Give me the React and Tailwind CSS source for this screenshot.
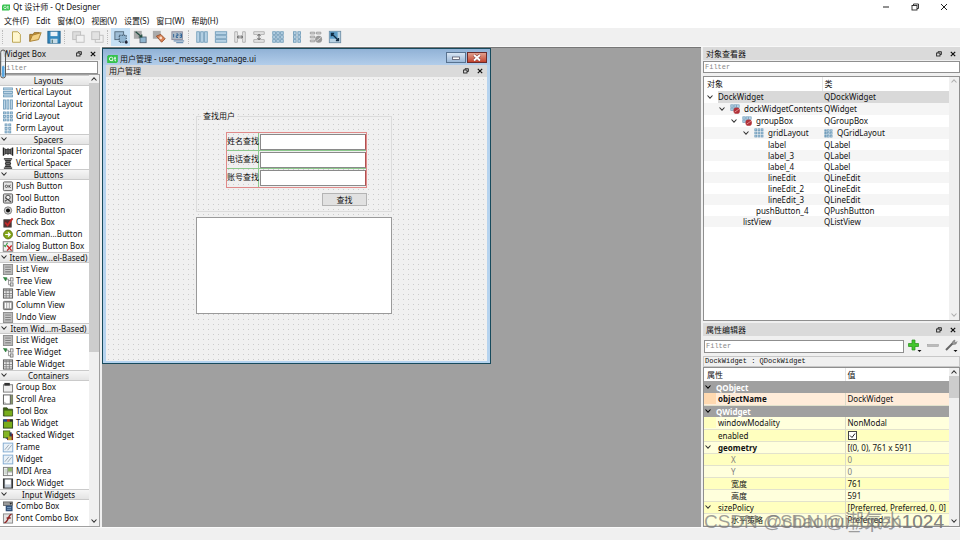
import React, { useState } from "react";
import clsx from "clsx";

const BLUE = "#6f9bb9";
const LIGHT = "#bcd6e8";

const Chevron = ({ dir = "down", className = "text-[#333]" }) => (
  <svg viewBox="0 0 8 8" className={clsx("w-2 h-2 shrink-0", className)} fill="none" stroke="currentColor" strokeWidth="1.1">
    <path d={dir === "down" ? "M1.5 2.5L4 5.2L6.5 2.5" : "M1.5 5.5L4 2.8L6.5 5.5"} />
  </svg>
);

const cells = (xs, ys, w, h) =>
  xs.flatMap((x) =>
    ys.map((y) => <rect key={x + "-" + y} x={x} y={y} width={w} height={h} fill={LIGHT} stroke={BLUE} strokeWidth="0.9" />)
  );

const listLines = (
  <>
    <rect x="1" y="0.5" width="10" height="11" fill="#b9b9b9" stroke="#8a8a8a" />
    <path d="M3 3.5h6M3 6h6M3 8.5h6" stroke="#777" />
    <path d="M3 4.5h6M3 7h6" stroke="#ddd" strokeWidth="0.6" />
  </>
);
const treeIcon = (
  <>
    <path d="M1 1.5l4 0.5l-1.5 3.5z" fill="#2f8f3f" stroke="#1f6a30" strokeWidth="0.6" />
    <path d="M4.5 3.5h2v6h2M6.5 5h2" fill="none" stroke="#777" strokeWidth="0.8" />
    <rect x="8.5" y="2" width="3" height="3.5" fill="#eee" stroke="#666" strokeWidth="0.8" />
    <rect x="8.5" y="7.5" width="3" height="3.5" fill="#ddd" stroke="#666" strokeWidth="0.8" />
  </>
);
const tableIcon = (
  <>
    <rect x="1" y="1" width="10" height="10" fill="#e6e6e6" stroke="#555" />
    <rect x="1.5" y="1.5" width="9" height="2" fill="#999" />
    <path d="M4 1v10M7.5 1v10M1 6h10M1 8.5h10" stroke="#777" strokeWidth="0.8" />
  </>
);
const frameIcon = (
  <>
    <rect x="0.8" y="1.2" width="10.4" height="9.6" fill="#e9f1f8" stroke="#7fa8cf" />
    <path d="M2.5 8.5l4.5-5.5M5.5 9l4.5-5.5" stroke="#8d9aa6" strokeWidth="0.9" />
  </>
);

const icons = {
  vlayout: cells([1], [1, 4.8, 8.6], 10, 2.2),
  hlayout: cells([1, 4.8, 8.6], [1], 2.2, 10),
  grid: cells([1, 4.8, 8.6], [1, 4.8, 8.6], 2.2, 2.2),
  form: cells([2.8, 6.8], [1, 4.8, 8.6], 2.2, 2.2),
  hspacer: (
    <>
      <path d="M1 1.5v9M11 1.5v9" stroke="#222" strokeWidth="1.4" />
      <path d="M2 2l2 1.5l2-1l2 1l2-1.5v8l-2-1.5l-2 1l-2-1l-2 1.5z" fill="#333" />
      <path d="M4 4.5v3.5M6 4v4M8 4.5v3.5" stroke="#aaa" strokeWidth="0.6" />
    </>
  ),
  vspacer: (
    <>
      <path d="M1.5 1h9M1.5 11h9" stroke="#222" strokeWidth="1.5" />
      <path d="M2 2h8l-1.5 2l1 2l-1 2l1.5 2h-8l1.5-2l-1-2l1-2z" fill="#333" />
      <path d="M4 4h4M4 6h4M4 8h4" stroke="#aaa" strokeWidth="0.6" />
    </>
  ),
  push: (
    <>
      <rect x="1" y="1" width="10" height="9.5" rx="1" fill="#e4e4e4" stroke="#555" />
      <circle cx="4.3" cy="5.8" r="1.3" fill="none" stroke="#333" strokeWidth="0.8" />
      <path d="M7 4.3v3M9 4.3l-1.8 1.5l1.8 1.5" fill="none" stroke="#333" strokeWidth="0.8" />
    </>
  ),
  tool: (
    <>
      <rect x="1" y="1" width="10" height="10" rx="1" fill="#d4d4d4" stroke="#555" />
      <circle cx="6" cy="4.8" r="2.4" fill="#f0f0f0" stroke="#444" />
      <path d="M3 5l6.5 5M2.5 9l2-1" stroke="#444" strokeWidth="1.2" />
    </>
  ),
  radio: (
    <>
      <circle cx="6" cy="6" r="4" fill="#d6d6d6" stroke="#777" />
      <circle cx="6" cy="6" r="2.2" fill="#111" />
    </>
  ),
  check: (
    <>
      <rect x="1.5" y="3" width="8" height="8" fill="#5a2c2c" stroke="#444" />
      <path d="M3 6l2.5 3L11 1.5" fill="none" stroke="#c42a2a" strokeWidth="2" />
    </>
  ),
  command: (
    <>
      <circle cx="6" cy="6" r="4.8" fill="#86a818" stroke="#566f08" />
      <path d="M3 6h5M6 3.8L8.3 6L6 8.2" fill="none" stroke="#fff" strokeWidth="1.3" />
    </>
  ),
  dialog: (
    <>
      <rect x="0.8" y="0.8" width="10.4" height="10.4" fill="#f0f0f0" stroke="#777" />
      <path d="M1.5 4.5l1.5 1.5L5.5 2" fill="none" stroke="#3c9a4a" strokeWidth="1.2" />
      <path d="M5 5l5 5.5M10 5l-5 5.5" stroke="#c62424" strokeWidth="1.5" />
    </>
  ),
  list: listLines,
  tree: treeIcon,
  table: tableIcon,
  column: (
    <>
      <rect x="1" y="1.5" width="10" height="9" rx="1" fill="#999" stroke="#666" />
      <path d="M3.3 3v6M6 3v6M8.7 3v6" stroke="#fff" strokeWidth="1.7" />
    </>
  ),
  group: (
    <>
      <rect x="1" y="3" width="10" height="8" fill="#eee" stroke="#777" />
      <rect x="2" y="1" width="6" height="3" fill="#333" />
    </>
  ),
  scroll: (
    <>
      <rect x="1" y="1" width="7.5" height="10" fill="#fff" stroke="#555" />
      <rect x="9" y="1" width="2.2" height="10" fill="#8a9a6a" stroke="#555" strokeWidth="0.6" />
      <path d="M2 9l2 1.5" stroke="#999" />
    </>
  ),
  toolbox: (
    <>
      <path d="M1 2h4l1 1.5h5V11H1z" fill="#3f6318" stroke="#2c3f14" strokeWidth="0.8" />
      <rect x="2" y="5" width="8.5" height="5.5" fill="#79ad1c" />
    </>
  ),
  tab: (
    <>
      <rect x="1" y="2" width="10" height="9" fill="#79ad1c" stroke="#28401a" />
      <rect x="1" y="1.5" width="4" height="2.5" fill="#23459a" />
      <rect x="5" y="1.5" width="3" height="2.5" fill="#b92c22" />
      <rect x="8" y="1.5" width="3" height="2.5" fill="#2a2a2a" />
    </>
  ),
  stacked: (
    <>
      <rect x="5" y="4" width="6.5" height="7" fill="#8a2320" />
      <rect x="3.5" y="2.5" width="6.5" height="7" fill="#26396f" />
      <rect x="1" y="1" width="7" height="7.5" fill="#84b522" stroke="#3d5a10" strokeWidth="0.8" />
      <rect x="6" y="7" width="4" height="4" fill="#b5a127" />
    </>
  ),
  frame: frameIcon,
  mdi: (
    <>
      <rect x="1" y="1.5" width="10" height="9" fill="#f4f4f4" stroke="#777" />
      <rect x="6" y="2" width="4.5" height="4" fill="#8fb36a" />
      <rect x="2" y="3" width="3" height="6" fill="#cfd8cf" />
      <path d="M5.5 2v8M5.5 6.5h5" stroke="#777" strokeWidth="0.7" />
    </>
  ),
  dock: (
    <>
      <rect x="1" y="1" width="10" height="10" fill="#c3ccd6" stroke="#333" />
      <path d="M1.5 1v10M10.5 1v10" stroke="#333" strokeWidth="1.5" />
      <rect x="3" y="2" width="6" height="5" fill="#fff" />
    </>
  ),
  combo: (
    <>
      <rect x="1" y="1" width="10" height="4" fill="#9a9a9a" stroke="#555" strokeWidth="0.8" />
      <path d="M7.5 2l3 0l-1.5 2z" fill="#222" />
      <rect x="3.5" y="5" width="7.5" height="6.2" fill="#2f4f78" />
      <path d="M5 7h4.5M5 9h4.5" stroke="#88aacc" />
    </>
  ),
  font: (
    <>
      <rect x="1" y="1" width="10" height="10" fill="#e3e3e3" stroke="#888" />
      <path d="M10 1.5C6 1 7 10 2 10.5M4.5 5.5h4.5" fill="none" stroke="#8e2323" strokeWidth="1.5" />
    </>
  ),
  broken: (
    <>
      {cells([1, 4.8], [1, 4.8], 2.8, 2.8)}
      <rect x="8" y="1" width="3" height="3" fill={LIGHT} stroke={BLUE} strokeWidth="0.8" />
      <circle cx="8" cy="8" r="3.8" fill="#b03038" />
      <path d="M5.5 9.8l5-3.5" stroke="#e6a0a0" strokeWidth="1" />
    </>
  ),
};

const Icon = ({ name, className = "w-3 h-3" }) => (
  <svg viewBox="0 0 12 12" className={clsx("shrink-0", className)}>{icons[name]}</svg>
);

const toolbarIcons = {
  new: <path d="M4 2h6l3 3v9H4z" fill="#fff7cf" stroke="#b59b45" />,
  open: (
    <>
      <path d="M2 13V5h4l1-2h6v3" fill="#c9963c" stroke="#8d6620" />
      <path d="M2 13L5 6l10-3l-3 8z" fill="#f3d184" stroke="#a37a2b" />
    </>
  ),
  save: (
    <>
      <rect x="1" y="1.5" width="14" height="13.5" fill="#3387bd" stroke="#1f5f8c" />
      <rect x="4" y="2" width="8" height="5" fill="#e9f2f8" />
      <rect x="4" y="10" width="8" height="5" fill="#c7dbe6" />
      <path d="M6 11v4" stroke="#255" />
    </>
  ),
  back: (
    <>
      <rect x="2" y="2" width="9" height="9" fill="#ddd" stroke="#bcbcbc" />
      <rect x="6" y="6" width="9" height="8" fill="#f1f1f1" stroke="#bcbcbc" />
    </>
  ),
  front: (
    <>
      <rect x="6" y="6" width="9" height="8" fill="#f1f1f1" stroke="#bcbcbc" />
      <rect x="2" y="2" width="9" height="9" fill="#e2e2e2" stroke="#bcbcbc" />
    </>
  ),
  widgets: (
    <>
      <rect x="1" y="2" width="10" height="9" fill="#9dbdd6" stroke="#4f6678" />
      <rect x="6" y="6" width="8" height="8" fill="#8fb4d0" stroke="#26384a" strokeDasharray="1.5 1.2" />
      <path d="M13 13h2v2h-2z" stroke="#223" fill="#223" />
    </>
  ),
  signals: (
    <>
      <rect x="1" y="1" width="9" height="9" fill="#a8a8a8" />
      <rect x="8" y="8" width="7" height="6.5" fill="#8fb5cf" stroke="#567" />
      <path d="M3 2l7 6M10 5v3H6.5" stroke="#234d3f" strokeWidth="1.4" fill="none" />
    </>
  ),
  buddies: (
    <>
      <rect x="1" y="1" width="9" height="9" fill="#aaa" />
      <path d="M5 7l5-2l5 5l-4 4z" fill="#d98255" stroke="#954b26" />
      <circle cx="10" cy="9" r="1.5" fill="#f9dfcd" />
    </>
  ),
  tabs: (
    <>
      <rect x="1" y="2" width="12" height="9" fill="#b0bcc7" stroke="#889" />
      <path d="M3 4.5v4M6 4.5h2v2H6v2h2M10 4.5h2v4h-2M10 6.5h2" stroke="#245c93" fill="none" />
      <path d="M3 12.5h12M6 14.5h8" stroke="#3c6f9f" />
    </>
  ),
  hl: [2, 6.5, 11].map((x) => <rect key={x} x={x} y="2" width="3" height="12" fill={LIGHT} stroke={BLUE} />),
  vl: [2, 6.5, 11].map((y) => <rect key={y} x="1.5" y={y} width="13" height="3" fill={LIGHT} stroke={BLUE} />),
  hs: (
    <>
      <path d="M2 2h3v12H2zM11 2h3v12h-3z" fill="#e8e8e8" stroke="#aaa" />
      <path d="M5 8h6M7 6l-2 2l2 2M9 6l2 2l-2 2" fill="none" stroke="#555" />
    </>
  ),
  vs: (
    <>
      <path d="M2 2h12v3H2zM2 11h12v3H2z" fill="#e8e8e8" stroke="#aaa" />
      <path d="M8 5v6M6 7l2-2l2 2M6 9l2 2l2-2" fill="none" stroke="#555" />
    </>
  ),
  gl: [2, 6.5, 11].flatMap((x) => [2, 6.5, 11].map((y) => <rect key={x + "g" + y} x={x} y={y} width="3" height="3" fill={LIGHT} stroke={BLUE} />)),
  fl: [4, 9].flatMap((x) => [2, 6.5, 11].map((y) => <rect key={x + "f" + y} x={x} y={y} width="3" height="3" fill={LIGHT} stroke={BLUE} />)),
  brk: (
    <>
      <path d="M1.5 2.5h5v2h-5zM8.5 2.5h5v2h-5zM1.5 7h5v2h-5zM1.5 11.5h5v2h-5z" fill="#ddd" stroke="#999" />
      <circle cx="11" cy="10.5" r="4" fill="#999" />
      <path d="M8.5 12.5l5-4" stroke="#ddd" />
    </>
  ),
  adjust: (
    <>
      <rect x="1.5" y="1.5" width="13" height="13" fill="#b9d3e4" stroke="#6d8ea6" />
      <rect x="2" y="2" width="9" height="8" fill="#5c9cc6" />
      <path d="M4 4l8 8M4 7V4h3M12 9v3H9" fill="none" stroke="#102c44" strokeWidth="1.5" />
    </>
  ),
};

const toolbarGroups = [
  ["new", "open", "save"],
  ["back", "front"],
  ["widgets", "signals", "buddies", "tabs"],
  ["hl", "vl", "hs", "vs", "gl", "fl", "brk", "adjust"],
];

const menus = ["文件(F)", "Edit", "窗体(O)", "视图(V)", "设置(S)", "窗口(W)", "帮助(H)"];

const widgetGroups = [
  { title: "Layouts", open: false, items: [["vlayout", "Vertical Layout"], ["hlayout", "Horizontal Layout"], ["grid", "Grid Layout"], ["form", "Form Layout"]] },
  { title: "Spacers", open: true, items: [["hspacer", "Horizontal Spacer"], ["vspacer", "Vertical Spacer"]] },
  {
    title: "Buttons",
    open: true,
    items: [["push", "Push Button"], ["tool", "Tool Button"], ["radio", "Radio Button"], ["check", "Check Box"], ["command", "Comman...Button"], ["dialog", "Dialog Button Box"]],
  },
  { title: "Item View...el-Based)", open: true, items: [["list", "List View"], ["tree", "Tree View"], ["table", "Table View"], ["column", "Column View"], ["list", "Undo View"]] },
  { title: "Item Wid...m-Based)", open: true, items: [["list", "List Widget"], ["tree", "Tree Widget"], ["table", "Table Widget"]] },
  {
    title: "Containers",
    open: true,
    items: [["group", "Group Box"], ["scroll", "Scroll Area"], ["toolbox", "Tool Box"], ["tab", "Tab Widget"], ["stacked", "Stacked Widget"], ["frame", "Frame"], ["frame", "Widget"], ["mdi", "MDI Area"], ["dock", "Dock Widget"]],
  },
  { title: "Input Widgets", open: true, items: [["combo", "Combo Box"], ["font", "Font Combo Box"]] },
];

// pad is the indent of each tree level
const objects = [
  { name: "DockWidget", cls: "QDockWidget", pad: "pl-[2px]", open: true, selected: true },
  { name: "dockWidgetContents", cls: "QWidget", pad: "pl-[14px]", open: true, icon: "broken" },
  { name: "groupBox", cls: "QGroupBox", pad: "pl-[26px]", open: true, icon: "broken" },
  { name: "gridLayout", cls: "QGridLayout", pad: "pl-[38px]", open: true, icon: "grid" },
  { name: "label", cls: "QLabel", pad: "pl-[64px]" },
  { name: "label_3", cls: "QLabel", pad: "pl-[64px]" },
  { name: "label_4", cls: "QLabel", pad: "pl-[64px]" },
  { name: "lineEdit", cls: "QLineEdit", pad: "pl-[64px]" },
  { name: "lineEdit_2", cls: "QLineEdit", pad: "pl-[64px]" },
  { name: "lineEdit_3", cls: "QLineEdit", pad: "pl-[64px]" },
  { name: "pushButton_4", cls: "QPushButton", pad: "pl-[52px]" },
  { name: "listView", cls: "QListView", pad: "pl-[39px]" },
];

const properties = [
  { section: "QObject" },
  { name: "objectName", value: "DockWidget", bg: "bg-[#ffecd9]", edge: "bg-[#ffd9b0]", bold: true },
  { section: "QWidget" },
  { name: "windowModality", value: "NonModal", bg: "bg-[#ffffdc]", edge: "bg-[#ffffbf]" },
  { name: "enabled", check: true, bg: "bg-[#ffffbf]", edge: "bg-[#ffffbf]" },
  { name: "geometry", value: "[(0, 0), 761 x 591]", bg: "bg-[#ffffdc]", edge: "bg-[#ffffdc]", bold: true, open: true },
  { name: "X", value: "0", bg: "bg-[#ffffbf]", edge: "bg-[#ffffbf]", child: true, dim: true },
  { name: "Y", value: "0", bg: "bg-[#ffffdc]", edge: "bg-[#ffffdc]", child: true, dim: true },
  { name: "宽度", value: "761", bg: "bg-[#ffffbf]", edge: "bg-[#ffffbf]", child: true },
  { name: "高度", value: "591", bg: "bg-[#ffffdc]", edge: "bg-[#ffffdc]", child: true },
  { name: "sizePolicy", value: "[Preferred, Preferred, 0, 0]", bg: "bg-[#ffffbf]", edge: "bg-[#ffffbf]", open: true },
  { name: "水平策略", value: "Preferred", bg: "bg-[#ffffdc]", edge: "bg-[#ffffdc]", child: true },
];

const DockButtons = () => (
  <div className="flex items-center gap-2">
    <button type="button" aria-label="Float" className="w-[6px] h-[6px]">
      <svg viewBox="0 0 6 6" fill="none" stroke="#222" strokeWidth="0.9">
        <path d="M2 2V0.7h3.4v2.8H4" />
        <rect x="0.6" y="2" width="3.4" height="3" />
      </svg>
    </button>
    <button type="button" aria-label="Close" className="w-[6px] h-[6px]">
      <svg viewBox="0 0 6 6" stroke="#111" strokeWidth="1.2"><path d="M0.8 0.8l4.4 4.4M5.2 0.8L0.8 5.2" /></svg>
    </button>
  </div>
);

const DockTitle = ({ title, className = "h-[13px] pr-1" }) => (
  <div className={clsx("flex items-center justify-between shrink-0 pl-[3px] bg-[#dadada]", className)}>
    <h2>{title}</h2>
    <DockButtons />
  </div>
);

const Filter = ({ className }) => {
  const [text, setText] = useState("");
  return (
    <input
      type="text"
      aria-label="Filter"
      placeholder="Filter"
      value={text}
      onChange={(e) => setText(e.target.value)}
      className={clsx(
        "block min-w-0 px-px shrink-0 bg-white border border-[#8f8f8f] font-['Liberation_Mono',monospace] text-[7px] placeholder-[#888] outline-none",
        className
      )}
    />
  );
};

const Scrollbar = ({ thumb, arrow }) => (
  <div className="flex flex-col items-center w-[10px] shrink-0 bg-[#f0f0f0]">
    <Chevron dir="up" className={arrow} />
    <div className="flex-1 w-full">
      <div className={clsx("w-full bg-[#cdcdcd]", thumb)} />
    </div>
    <Chevron className={clsx("mb-px", arrow)} />
  </div>
);

const QtLogo = ({ className }) => (
  <svg viewBox="0 0 12 9" className={className}>
    <path d="M1.5 0H12v7.5L10.5 9H0V1.5z" fill="#35c24d" />
    <circle cx="4.5" cy="4.4" r="2" fill="none" stroke="#fff" />
    <path d="M5 5.5l1.3 1.5M8.8 2v4.5h1.2M7.6 3.6h2.4" fill="none" stroke="#fff" />
  </svg>
);

const TitleBar = () => (
  <header className="flex items-center justify-between h-[14px] shrink-0 bg-white pl-[2px] pr-3">
    <div className="flex items-center gap-[3px]">
      <QtLogo className="w-2 h-[7px]" />
      <h1>Qt 设计师 - Qt Designer</h1>
    </div>
    <div className="flex gap-[21px]">
      <button type="button" aria-label="Minimize" className="w-2 h-2">
        <svg viewBox="0 0 8 8" stroke="#222" fill="none"><path d="M1 4h6" /></svg>
      </button>
      <button type="button" aria-label="Restore" className="w-2 h-2">
        <svg viewBox="0 0 8 8" stroke="#222" fill="none" strokeWidth="0.9">
          <rect x="1" y="2.5" width="5" height="4.5" />
          <path d="M2.5 2.5V1H7.5v4.5H6" />
        </svg>
      </button>
      <button type="button" aria-label="Close" className="w-2 h-2">
        <svg viewBox="0 0 8 8" stroke="#222"><path d="M1 1l6 6M7 1L1 7" /></svg>
      </button>
    </div>
  </header>
);

const Toolbar = () => {
  const [mode, setMode] = useState("widgets");
  return (
    <div className="flex items-center h-[19px] shrink-0 pl-[2px] gap-px border-b border-[#f8f8f8]">
      {toolbarGroups.map((group, i) => (
        <div key={i} className="flex items-center gap-[2px]">
          <span className="w-[2px] h-[14px] border-l border-dotted border-[#bbb]" />
          <div className="flex">
            {group.map((name) => (
              <button
                key={name}
                type="button"
                aria-label={name}
                onClick={() => i === 2 && setMode(name)}
                className={clsx("flex items-center justify-center w-[19px] h-[18px]", mode === name && "bg-[#c5e0f5]")}
              >
                <svg viewBox="0 0 16 16" className="w-[14px] h-[14px]">{toolbarIcons[name]}</svg>
              </button>
            ))}
          </div>
        </div>
      ))}
    </div>
  );
};

const WidgetBox = () => (
  <aside className="relative flex flex-col w-[100px] shrink-0">
    <DockTitle title="Widget Box" />
    <Filter className="w-[98px] mt-px h-[13px]" />
    <div className="flex flex-1 min-h-0 border border-[#a0a0a0] border-l-0 bg-white">
      <div className="flex-1 min-w-0 overflow-hidden">
        {widgetGroups.map((group) => (
          <section key={group.title}>
            <h3 className="relative flex items-center justify-center h-[11px] pl-2 leading-[9px] whitespace-nowrap border-y border-[#cacaca] bg-linear-to-b from-[#f6f6f6] to-[#e4e4e4]">
              {group.open && <Chevron className="absolute left-0 top-0 text-[#333]" />}
              {group.title}
            </h3>
            <ul>
              {group.items.map(([icon, label]) => (
                <li key={label} className="flex items-center h-3 pl-[2px] gap-[2px] leading-3 whitespace-nowrap">
                  <Icon name={icon} className="w-3 h-[11px]" />
                  {label}
                </li>
              ))}
            </ul>
          </section>
        ))}
      </div>
      <Scrollbar thumb="h-[62%]" arrow="text-[#333]" />
    </div>
    <svg viewBox="0 0 7 34" className="absolute left-0 top-0 w-[7px] h-[34px]">
      <rect x="0.7" y="3" width="4.8" height="28" rx="2.4" fill="#e9f1f8" fillOpacity="0.7" stroke="#555" />
      <rect x="2" y="19" width="2.5" height="11" rx="1" fill="#58a6e0" />
    </svg>
  </aside>
);

const fields = [
  { id: "lineEdit", label: "姓名查找" },
  { id: "lineEdit_2", label: "电话查找" },
  { id: "lineEdit_3", label: "账号查找" },
];

const FormWindow = () => (
  <section className="w-[389px] border border-[#174a5c] bg-[#b5d3ef] px-[3px] pb-[2px]">
    <div className="flex items-center justify-between -mx-[3px] px-[3px] h-4 bg-linear-to-b from-[#91b2d6] to-[#b2cdea]">
      <div className="flex items-center gap-[2px] pt-1 pl-px">
        <QtLogo className="w-[11px] h-2" />
        <h2>用户管理 - user_message_manage.ui</h2>
      </div>
      <div className="flex gap-px">
        <button type="button" aria-label="Minimize form" className="w-5 h-[11px] border border-[#58728f] bg-linear-to-b from-[#d8e5f3] to-[#9db9d8]">
          <svg viewBox="0 0 18 9"><rect x="5.5" y="4" width="7" height="2.5" fill="#fff" stroke="#556" strokeWidth="0.8" /></svg>
        </button>
        <button type="button" aria-label="Close form" className="w-5 h-[11px] border border-[#6b2b2b] bg-linear-to-b from-[#e0a08f] to-[#c2402c]">
          <svg viewBox="0 0 18 9">
            <path d="M6 2l6 5.5M12 2L6 7.5" stroke="#733" strokeWidth="3" />
            <path d="M6 2l6 5.5M12 2L6 7.5" stroke="#fff" strokeWidth="2" />
          </svg>
        </button>
      </div>
    </div>
    <DockTitle title="用户管理" className="h-3 pr-1" />
    <div className="h-[284px] pt-[33px] pl-[90px] bg-[#f0f0f0] bg-[radial-gradient(circle,#cccccc_0.5px,transparent_1px)] bg-[size:5px_5px]">
      <fieldset className="w-[196px] h-[102px] border border-[#dcdcdc] pl-[29px]">
        <legend className="-ml-[25px] px-[2px] leading-3 bg-[#f0f0f0]">查找用户</legend>
        <div className="w-[141px] mt-[10px] border border-[#e08a8a] divide-y divide-[#8cc98c]">
          {fields.map((f) => (
            <div key={f.id} className="flex items-center h-[18px]">
              <label htmlFor={f.id} className="w-8 shrink-0 h-full leading-4 whitespace-nowrap border-r border-[#8cc98c]">{f.label}</label>
              <input id={f.id} type="text" className="flex-1 min-w-0 ml-px h-4 bg-white border border-[#8a8a8a] border-r-[#b05050] outline-none" />
            </div>
          ))}
        </div>
        <button type="button" className="block w-[45px] h-[13px] mt-[5px] ml-[96px] leading-[11px] bg-[#e1e1e1] border border-[#b4b4b4]">查找</button>
      </fieldset>
      <div className="w-[196px] h-[97px] mt-[5px] bg-white border border-[#9a9a9a]" />
    </div>
  </section>
);

const ObjectInspector = () => (
  <section className="flex flex-col h-[274px] shrink-0">
    <DockTitle title="对象查看器" />
    <Filter className="w-full h-3 mt-px" />
    <div className="flex flex-1 min-h-0 mt-[3px] bg-white border border-[#8f8f8f]">
      <div className="flex-1 min-w-0">
        <table className="w-full table-fixed border-collapse text-left">
          <thead>
            <tr className="h-[14px]">
              <th className="w-[118px] p-0 pl-[3px] font-normal border-r border-[#e5e5e5]">对象</th>
              <th className="p-0 pl-[2px] font-normal">类</th>
            </tr>
          </thead>
          <tbody>
            {objects.map((o, i) => (
              <tr key={o.name} className={clsx(o.open ? "h-3 leading-3" : "h-[11px] leading-[11px]", i % 2 === 1 && "bg-[#f5f5f5]")}>
                <td className="p-0">
                  <div className={clsx("flex items-center", o.pad)}>
                    {o.open && <Chevron />}
                    <span className={clsx("flex flex-1 items-center gap-1 whitespace-nowrap", o.open && "ml-1", o.selected && "bg-[#d9d9d9]")}>
                      {o.icon && <Icon name={o.icon} className="w-[10px] h-[10px]" />}
                      {o.name}
                    </span>
                  </div>
                </td>
                <td className={clsx("p-0 pl-[2px]", o.selected && "bg-[#d9d9d9]")}>
                  <div className="flex items-center gap-1">
                    {o.icon === "grid" && <Icon name="grid" className="w-[9px] h-[9px]" />}
                    {o.cls}
                  </div>
                </td>
              </tr>
            ))}
          </tbody>
        </table>
      </div>
      <Scrollbar thumb="h-0" arrow="text-[#b0b0b0]" />
    </div>
  </section>
);

const PropertyEditor = () => {
  const [enabled, setEnabled] = useState(true);
  return (
    <section className="flex flex-col flex-1 min-h-0 mt-[2px]">
      <DockTitle title="属性编辑器" />
      <div className="flex items-center h-5 shrink-0 pl-px pr-[2px]">
        <Filter className="flex-1 h-[13px]" />
        <div className="flex items-center gap-[5px] ml-1">
          <button type="button" aria-label="Add property" className="w-[14px] h-[14px]">
            <svg viewBox="0 0 14 14">
              <path d="M4 1h3v3.5h3.5v3H7V11H4V7.5H0.5v-3H4z" fill="#43c62d" stroke="#268c1a" strokeWidth="0.7" />
              <path d="M9.5 11h4l-2 2z" fill="#111" />
            </svg>
          </button>
          <button type="button" aria-label="Remove property" className="w-3 h-[14px]">
            <svg viewBox="0 0 12 14"><rect x="0.5" y="5.5" width="11" height="2" fill="#bbb" stroke="#999" strokeWidth="0.5" /></svg>
          </button>
          <button type="button" aria-label="Configure" className="w-[14px] h-[14px]">
            <svg viewBox="0 0 14 14">
              <path d="M2 11L9 4" stroke="#666" strokeWidth="2" />
              <path d="M8 4.5L9 2l2-1l-0.5 2l1.5 0.5l1-1l-1 2.5l-2.5 0.5z" fill="#999" stroke="#666" strokeWidth="0.5" />
              <path d="M9.5 11h4l-2 2z" fill="#111" />
            </svg>
          </button>
        </div>
      </div>
      <p className="h-[11px] shrink-0 pl-px leading-[9px] border border-[#c8c8c8] font-['Liberation_Mono',monospace] text-[7px]">DockWidget : QDockWidget</p>
      <div className="flex flex-1 min-h-0 bg-white border border-[#8f8f8f]">
        <div className="flex-1 min-w-0 overflow-hidden">
          <table className="w-full table-fixed border-collapse text-left">
            <thead>
              <tr className="h-[13px]">
                <th className="w-[141px] p-0 pl-[3px] font-normal border-r border-[#e5e5e5]">属性</th>
                <th className="p-0 pl-[2px] font-normal">值</th>
              </tr>
            </thead>
            <tbody>
              {properties.map((p) =>
                p.section ? (
                  <tr key={p.section} className="h-3 leading-[11px] bg-[#a0a0a0] text-white">
                    <td colSpan={2} className="p-0">
                      <div className="flex items-center gap-1 font-bold">
                        <Chevron className="text-black" />
                        {p.section}
                      </div>
                    </td>
                  </tr>
                ) : (
                  <tr key={p.name} className={clsx("h-3 leading-[11px] border-b border-[#e2e2cc]", p.bg, p.dim && "text-[#808080]")}>
                    <td className="p-0 border-r border-[#dcdcc8]">
                      <div className="flex items-center">
                        <span className={clsx("flex items-center w-3 h-[11px] shrink-0", p.edge)}>{p.open && <Chevron />}</span>
                        <span className={clsx("whitespace-nowrap", p.bold && "font-bold", p.child ? "pl-[15px]" : "pl-[2px]")}>{p.name}</span>
                      </div>
                    </td>
                    <td className="p-0 pl-[2px] whitespace-nowrap">
                      {p.check ? (
                        <label className="relative flex items-center">
                          <input
                            type="checkbox"
                            aria-label="enabled"
                            checked={enabled}
                            onChange={(e) => setEnabled(e.target.checked)}
                            className="appearance-none w-[9px] h-[9px] bg-white border border-[#444]"
                          />
                          {enabled && (
                            <svg viewBox="0 0 9 9" className="absolute left-0 w-[9px] h-[9px] pointer-events-none">
                              <path d="M2 4.5l2 2l3-4" fill="none" stroke="#222" />
                            </svg>
                          )}
                        </label>
                      ) : (
                        p.value
                      )}
                    </td>
                  </tr>
                )
              )}
            </tbody>
          </table>
        </div>
        <Scrollbar thumb="h-[22px]" arrow="text-[#333]" />
      </div>
    </section>
  );
};

const App = () => (
  <div className="relative flex flex-col h-screen overflow-hidden bg-[#f0f0f0] text-[#111] text-[8px] leading-3 font-['Noto_Sans','Noto_Sans_CJK_SC',sans-serif]">
    <TitleBar />
    <nav className="flex items-center h-[14px] shrink-0 gap-[7px] pl-1 bg-white">
      {menus.map((m) => (
        <button key={m} type="button">{m}</button>
      ))}
    </nav>
    <Toolbar />
    <main className="flex flex-1 min-h-0">
      <WidgetBox />
      <div className="flex-1 min-w-0 ml-[2px] overflow-hidden bg-[#a0a0a0] border-t border-[#777]">
        <FormWindow />
      </div>
      <aside className="flex flex-col w-[257px] shrink-0 ml-[2px]">
        <ObjectInspector />
        <PropertyEditor />
      </aside>
    </main>
    <footer className="h-[13px] shrink-0 border-t border-[#fafafa]" />
    <div className="absolute right-4 bottom-[6px] text-[19px] leading-6 whitespace-nowrap text-right text-[#777]/70 font-['Liberation_Sans','Noto_Sans_CJK_SC',sans-serif] pointer-events-none">
      <p>CSDN @chaohui_open1024</p>
      <p className="absolute right-0 top-0">CSDN @潮気水1024</p>
    </div>
  </div>
);

export default App;
